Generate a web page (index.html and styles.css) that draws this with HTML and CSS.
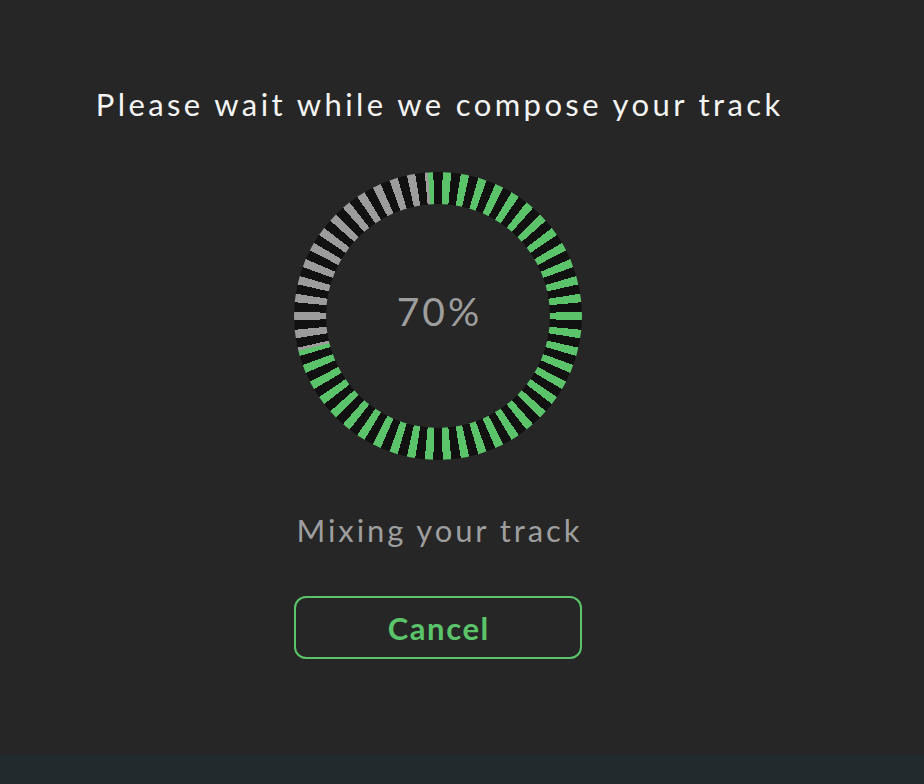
FILE: index.html
```html
<!DOCTYPE html>
<html lang="en">
<head>
<meta charset="utf-8">
<title>Composing</title>
<link rel="stylesheet" href="styles.css">
</head>
<body>
<div class="screen">
  <main class="dialog">
    <h1 class="title">Please wait while we compose your track</h1>
    <div class="ring" role="progressbar" aria-valuenow="70" aria-valuemin="0" aria-valuemax="100">
      <div class="ring-hole"><span class="pct">70%</span></div>
    </div>
    <p class="status">Mixing your track</p>
    <button class="cancel" type="button">Cancel</button>
  </main>
  <footer class="strip"></footer>
</div>
</body>
</html>
```
FILE: styles.css
```css
html, body {
  margin: 0;
  padding: 0;
  background: #262626;
}

.screen {
  width: 924px;
  height: 784px;
  display: flex;
  flex-direction: column;
  font-family: Lato, "Open Sans", sans-serif;
}

.dialog {
  width: 876px;
  height: 755px;
  display: flex;
  flex-direction: column;
  align-items: center;
  box-sizing: border-box;
  padding-top: 84px;
}

.title {
  margin: 0;
  padding-left: 3.4px;
  font-size: 31px;
  line-height: 40px;
  font-weight: 400;
  color: #f4f4f4;
  letter-spacing: 3.4px;
}

.ring {
  margin-top: 48px;
  width: 288px;
  height: 288px;
  border-radius: 50%;
  display: flex;
  align-items: center;
  justify-content: center;
  background:
    repeating-conic-gradient(#111111 0deg 1.9deg, transparent 1.9deg 5.3deg, #111111 5.3deg 7.2deg),
    conic-gradient(#5bc46a 0deg 256deg, #9c9c9c 256deg 356deg, #5bc46a 356deg 360deg);
}

.ring-hole {
  width: 224px;
  height: 224px;
  border-radius: 50%;
  background: #262626;
  display: flex;
  align-items: center;
  justify-content: center;
}

.pct {
  margin-bottom: 10px;
  padding-left: 3px;
  font-size: 39px;
  letter-spacing: 3px;
  color: #9e9e9e;
  font-weight: 400;
}

.status {
  margin: 50px 0 0;
  padding-left: 2.9px;
  font-size: 31px;
  line-height: 40px;
  letter-spacing: 2.9px;
  color: #9e9e9e;
}

.cancel {
  margin-top: 46px;
  width: 288px;
  height: 63px;
  padding: 0 0 0 1.6px;
  border: 2px solid #5bc46a;
  border-radius: 12px;
  background: transparent;
  color: #5bc46a;
  font-family: Lato, "Open Sans", sans-serif;
  font-size: 31px;
  letter-spacing: 1.6px;
  font-weight: 700;
  cursor: pointer;
}

.strip {
  flex: 1;
  background: #212a2c;
}
```
